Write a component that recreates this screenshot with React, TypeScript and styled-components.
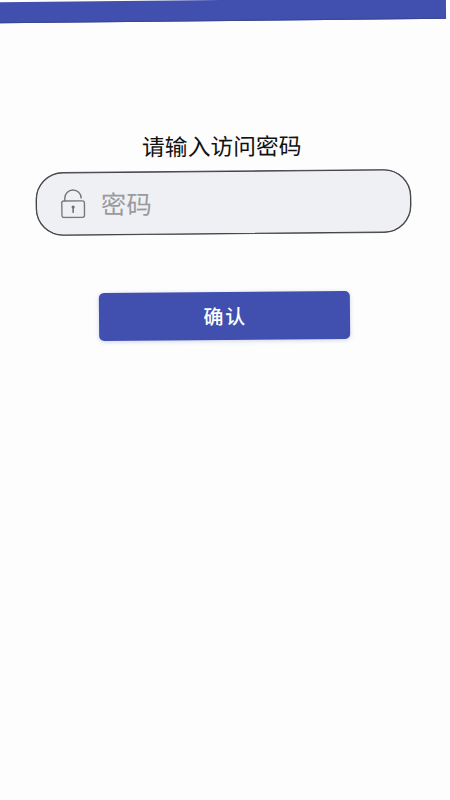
import React from "react";
import styled, { createGlobalStyle } from "styled-components";

const GlobalStyle = createGlobalStyle`
  * { box-sizing: border-box; }
  html, body { margin: 0; background: #fdfdfd; }
  body { font-family: "Noto Sans CJK SC", sans-serif; }
`;

const Screen = styled.main`
  width: 450px;
  height: 800px;
  overflow: hidden;
  background: #fdfdfd;
  display: flex;
  flex-direction: column;
`;

const TopBar = styled.header`
  width: 450px;
  height: 20.5px;
  flex: none;
  margin-left: -4px;
  background: #414fae;
  border-bottom: 1px solid #3b468f;
  transform: rotate(-0.58deg);
`;

const Form = styled.form`
  width: 446px;
  display: flex;
  flex-direction: column;
  align-items: center;
  padding-top: 108.5px;
`;

const Title = styled.label`
  height: 34px;
  line-height: 34px;
  font-size: 22.8px;
  color: #111;
  white-space: nowrap;
  transform: rotate(-0.4deg);
  margin-left: -2px;
`;

const Field = styled.div`
  width: 374.5px;
  height: 63px;
  margin-top: 7.5px;
  padding: 0 24px 1.5px;
  display: flex;
  align-items: center;
  gap: 15px;
  border: 1px solid #444448;
  box-shadow: 0 0 0 0.4px #55555a;
  border-radius: 27px;
  background: #eff0f3;
  transform: rotate(-0.52deg);
`;

const Lock = styled.svg`
  width: 25px;
  height: 30px;
  flex: none;
`;

const Input = styled.input`
  flex: 1;
  min-width: 0;
  height: 40px;
  padding: 0;
  border: 0;
  outline: 0;
  background: transparent;
  font: 25.4px/40px "Noto Sans CJK SC", sans-serif;
  color: #333;
  &::placeholder { color: #999a9d; opacity: 1; }
`;

const Submit = styled.button`
  width: 250.5px;
  height: 47.5px;
  margin: 58px 0 0 2px;
  padding: 0 0 0 2px;
  border: 0;
  border-radius: 5px;
  background: #414fae;
  box-shadow: 0 1px 4px rgba(65, 79, 174, 0.25);
  color: #fff;
  font: 500 20px/47px "Noto Sans CJK SC", sans-serif;
  letter-spacing: 1.8px;
  transform: rotate(-0.5deg);
`;

const LockIcon = () => (
  <Lock viewBox="0 0 25 30" fill="none" stroke="#77777c" strokeWidth="1.4" strokeLinecap="round">
    <rect x="0.8" y="12.6" width="22.6" height="16.5" rx="2" />
    <path d="M3.8 12.4V9.8a8.2 8.2 0 0 1 16.4 0" />
    <circle cx="12.1" cy="18.7" r="1.6" fill="#66666c" stroke="none" />
    <path d="M12.1 18.7v5.2" strokeWidth="1.7" />
  </Lock>
);

export default function App() {
  return (
    <>
      <GlobalStyle />
      <Screen>
        <TopBar />
        <Form onSubmit={(event) => event.preventDefault()}>
          <Title htmlFor="password">请输入访问密码</Title>
          <Field>
            <LockIcon />
            <Input id="password" type="password" placeholder="密码" />
          </Field>
          <Submit type="submit">确认</Submit>
        </Form>
      </Screen>
    </>
  );
}
